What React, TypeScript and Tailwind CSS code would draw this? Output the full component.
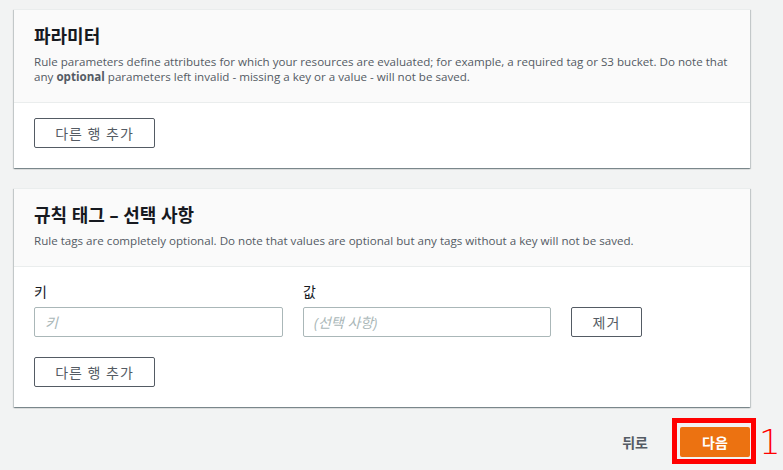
const FONT = "font-['Open_Sans','Noto_Sans_CJK_KR',sans-serif]"

function OutlineButton({ label, className = '' }: { label: string; className?: string }) {
  return (
    <button
      className={`h-[30px] border border-[#545b64] rounded-[2px] bg-white text-[14px] text-[#545b64] tracking-[1px] ${className}`}
    >
      {label}
    </button>
  )
}

function Card({ title, children, body }: { title: string; children: React.ReactNode; body: React.ReactNode }) {
  return (
    <section className="w-[736px] bg-white shadow-[0_1px_1px_0_rgba(0,28,36,0.3),1px_1px_1px_0_rgba(0,28,36,0.15),-1px_1px_1px_0_rgba(0,28,36,0.15)] border-t border-[#eaeded]">
      <div className="bg-[#fafafa] border-b border-[#eaeded] px-5 pt-[15px] pb-[18px]">
        <h2 className="text-[18px] leading-[22px] font-bold text-[#16191f]">{title}</h2>
        <p className="mt-[7px] text-[11.6px] leading-[15px] text-[#545b64] whitespace-nowrap">{children}</p>
      </div>
      <div className="px-5 pt-[15px] pb-5">{body}</div>
    </section>
  )
}

export default function App() {
  return (
    <div className={`min-h-[470px] bg-[#f2f3f3] pl-[14px] pt-[9px] ${FONT}`}>
      <Card
        title="파라미터"
        body={<OutlineButton label="다른 행 추가" className="w-[121px]" />}
      >
        Rule parameters define attributes for which your resources are evaluated; for example, a required tag or S3 bucket. Do note that
        <br />
        any <b className="font-bold">optional</b> parameters left invalid - missing a key or a value - will not be saved.
      </Card>

      <div className="h-5" />

      <Card
        title="규칙 태그 – 선택 사항"
        body={
          <div>
            <div className="flex gap-5 items-end">
              <div className="w-[249px]">
                <div className="text-[14px] leading-[20px] text-[#16191f] mb-[5px]">키</div>
                <input
                  placeholder="키"
                  className="w-full h-[30px] border border-[#aab7b8] rounded-[2px] px-[10px] text-[14px] placeholder:italic placeholder:text-[#aab7b8] outline-none"
                />
              </div>
              <div className="w-[248px]">
                <div className="text-[14px] leading-[20px] text-[#16191f] mb-[5px]">값</div>
                <input
                  placeholder="(선택 사항)"
                  className="w-full h-[30px] border border-[#aab7b8] rounded-[2px] px-[10px] text-[14px] placeholder:italic placeholder:text-[#aab7b8] outline-none"
                />
              </div>
              <OutlineButton label="제거" className="w-[71px]" />
            </div>
            <OutlineButton label="다른 행 추가" className="w-[121px] mt-5" />
          </div>
        }
      >
        Rule tags are completely optional. Do note that values are optional but any tags without a key will not be saved.
      </Card>

      <div className="w-[736px] flex justify-end items-center gap-[32px] pt-5">
        <button className="text-[14px] font-semibold text-[#545b64]">뒤로</button>
        <div className="relative">
          <button className="w-[70px] h-[30px] bg-[#ec7211] rounded-[2px] text-white text-[14px] font-bold">
            다음
          </button>
          <div className="absolute left-[-8px] top-[-9px] w-[84px] h-[46px] border-[5px] border-[#ff0000] pointer-events-none" />
          <span className="absolute left-[79px] top-[-2px] text-[34px] leading-[34px] font-['DejaVu_Sans',sans-serif] font-extralight text-[#ff0000]">
            1
          </span>
        </div>
      </div>
    </div>
  )
}
